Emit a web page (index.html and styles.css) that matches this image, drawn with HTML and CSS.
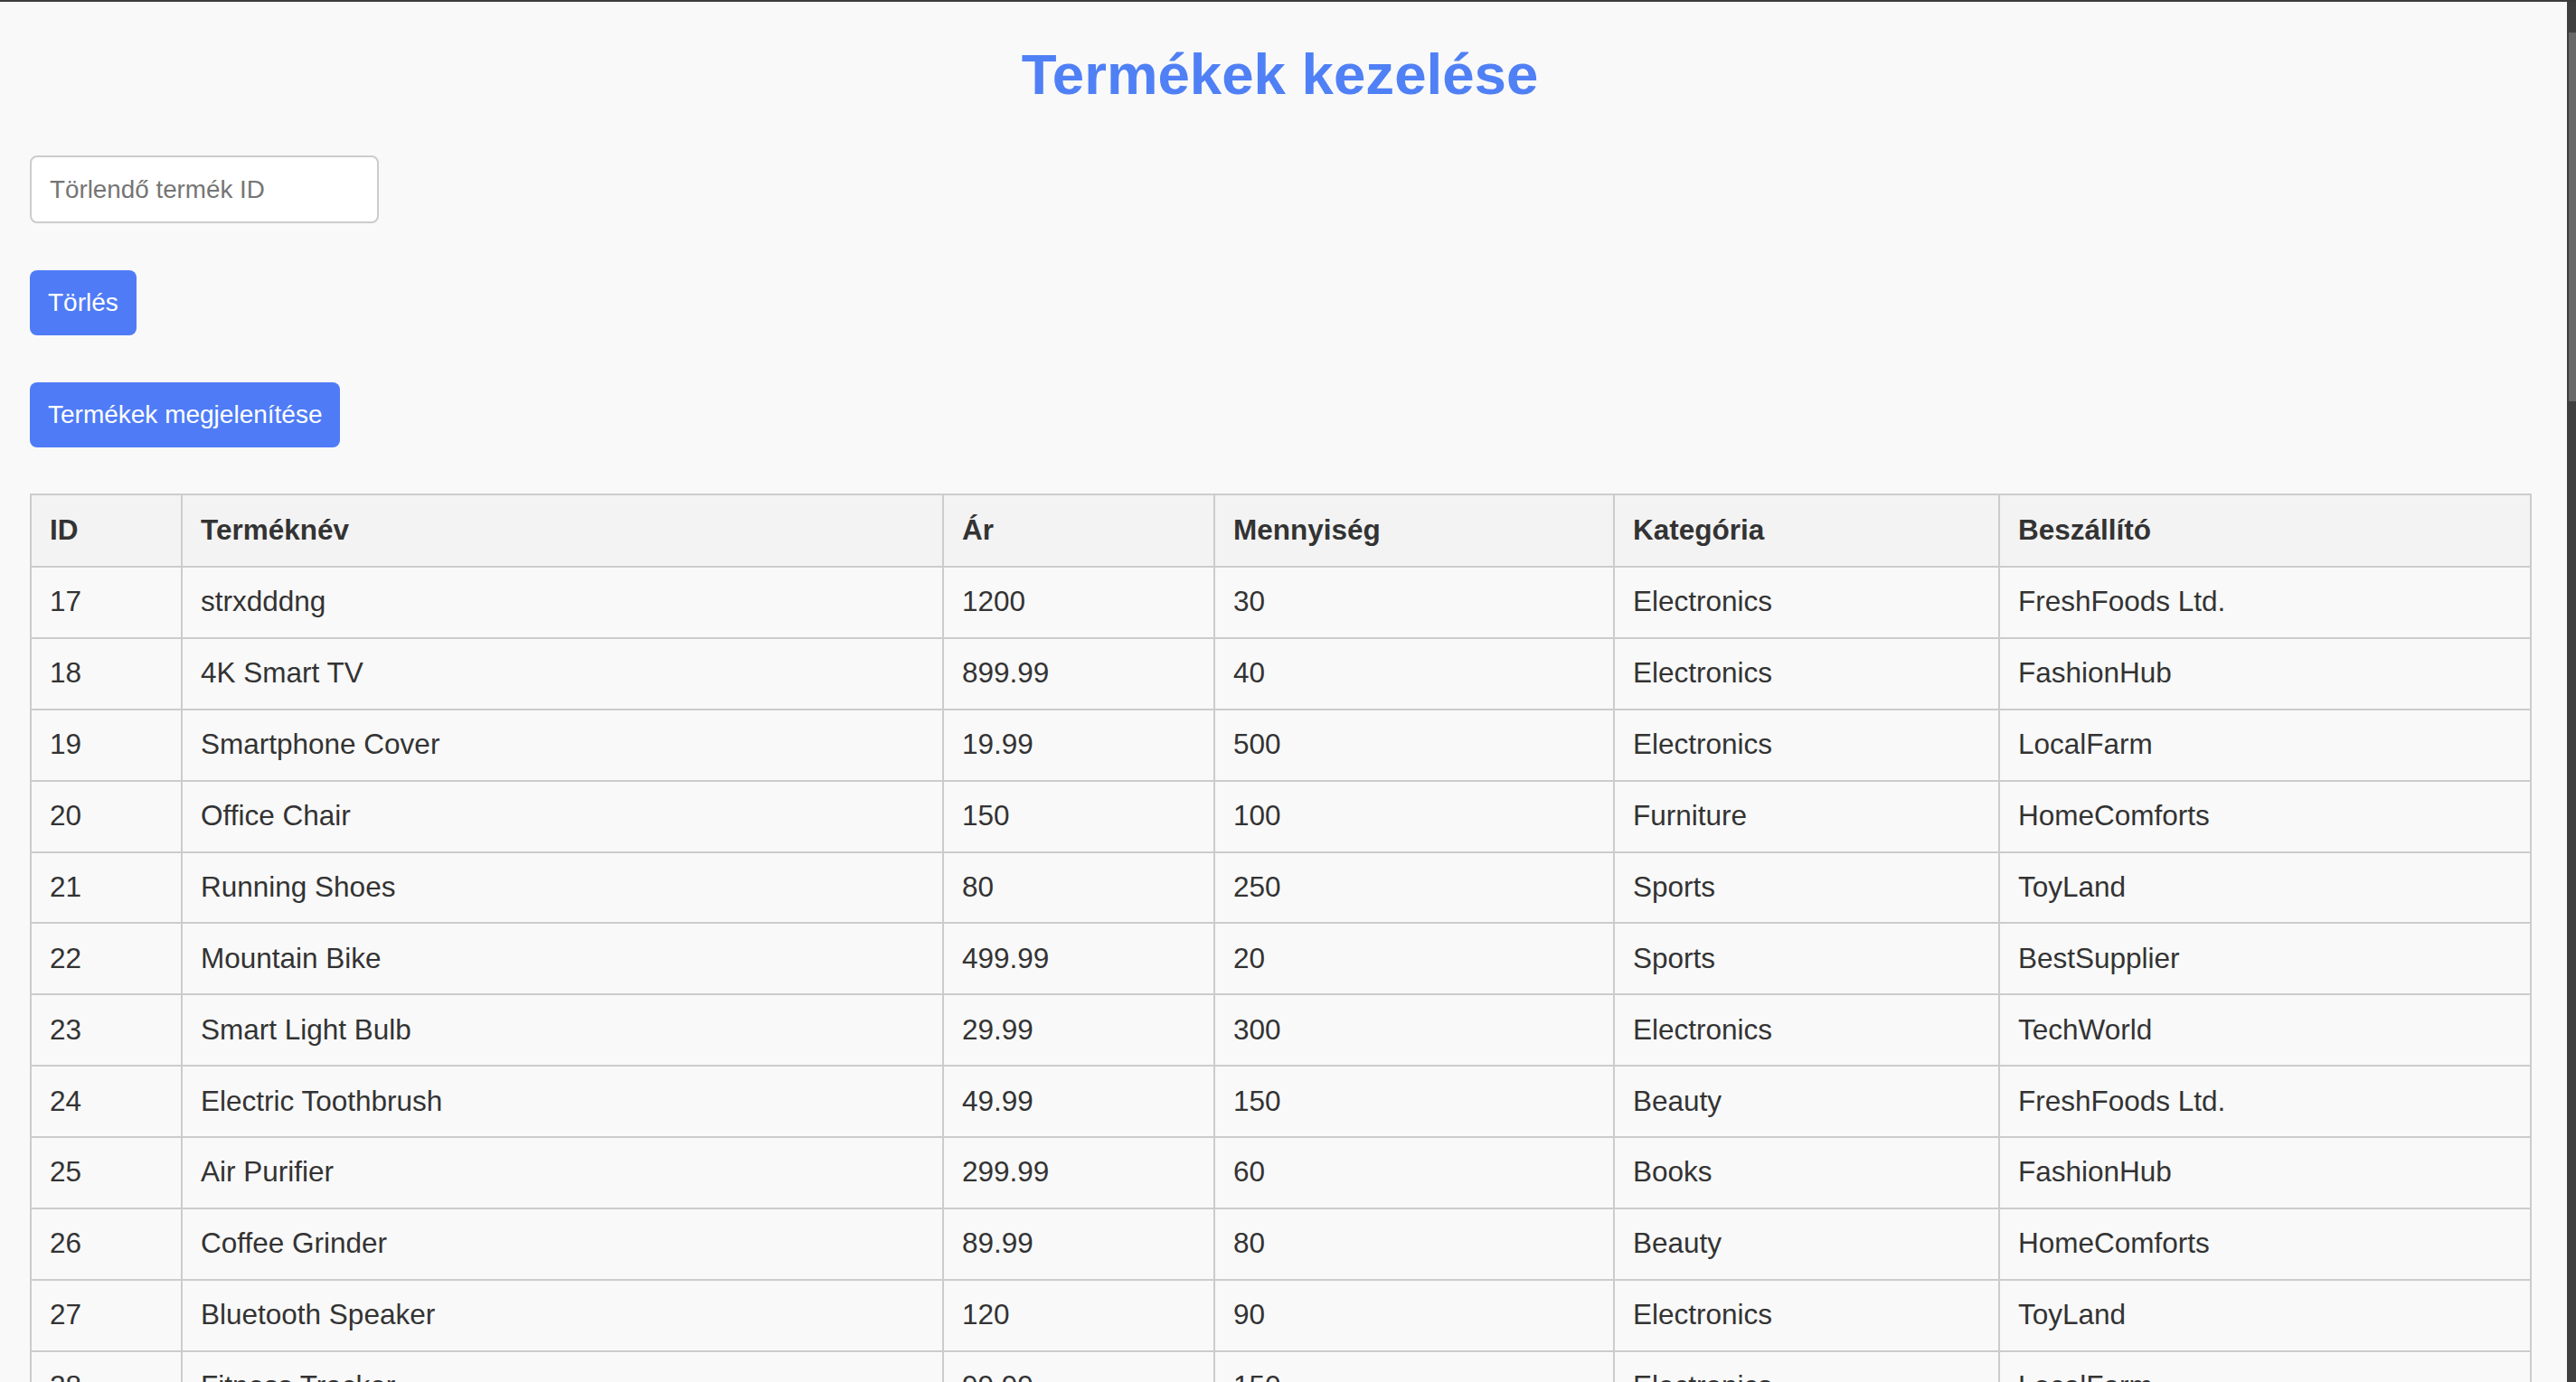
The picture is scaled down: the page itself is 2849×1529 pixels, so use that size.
FILE: index.html
```html
<!DOCTYPE html>
<html lang="hu">
<head>
<meta charset="utf-8">
<title>Termékek kezelése</title>
<link rel="stylesheet" href="styles.css">
</head>
<body>
<div class="window">
  <main class="page">
    <div class="content">
      <h1 class="title">Termékek kezelése</h1>
      <input class="id-input" type="text" placeholder="Törlendő termék ID">
      <button class="btn btn-delete">Törlés</button>
      <button class="btn btn-show">Termékek megjelenítése</button>
      <table class="products">
        <colgroup>
          <col class="c-id"><col class="c-name"><col class="c-price"><col class="c-qty"><col class="c-cat"><col class="c-sup">
        </colgroup>
        <thead>
          <tr><th>ID</th><th>Terméknév</th><th>Ár</th><th>Mennyiség</th><th>Kategória</th><th>Beszállító</th></tr>
        </thead>
        <tbody>
          <tr><td>17</td><td>strxdddng</td><td>1200</td><td>30</td><td>Electronics</td><td>FreshFoods Ltd.</td></tr>
          <tr><td>18</td><td>4K Smart TV</td><td>899.99</td><td>40</td><td>Electronics</td><td>FashionHub</td></tr>
          <tr><td>19</td><td>Smartphone Cover</td><td>19.99</td><td>500</td><td>Electronics</td><td>LocalFarm</td></tr>
          <tr><td>20</td><td>Office Chair</td><td>150</td><td>100</td><td>Furniture</td><td>HomeComforts</td></tr>
          <tr><td>21</td><td>Running Shoes</td><td>80</td><td>250</td><td>Sports</td><td>ToyLand</td></tr>
          <tr><td>22</td><td>Mountain Bike</td><td>499.99</td><td>20</td><td>Sports</td><td>BestSupplier</td></tr>
          <tr><td>23</td><td>Smart Light Bulb</td><td>29.99</td><td>300</td><td>Electronics</td><td>TechWorld</td></tr>
          <tr><td>24</td><td>Electric Toothbrush</td><td>49.99</td><td>150</td><td>Beauty</td><td>FreshFoods Ltd.</td></tr>
          <tr><td>25</td><td>Air Purifier</td><td>299.99</td><td>60</td><td>Books</td><td>FashionHub</td></tr>
          <tr><td>26</td><td>Coffee Grinder</td><td>89.99</td><td>80</td><td>Beauty</td><td>HomeComforts</td></tr>
          <tr><td>27</td><td>Bluetooth Speaker</td><td>120</td><td>90</td><td>Electronics</td><td>ToyLand</td></tr>
          <tr><td>28</td><td>Fitness Tracker</td><td>99.99</td><td>150</td><td>Electronics</td><td>LocalFarm</td></tr>
          <tr><td>29</td><td>Gaming Mouse</td><td>59.99</td><td>120</td><td>Electronics</td><td>TechWorld</td></tr>
        </tbody>
      </table>
    </div>
  </main>
  <div class="scrollbar"><div class="thumb"></div></div>
</div>
</body>
</html>
```

FILE: styles.css
```css
html, body {
  margin: 0;
  padding: 0;
  height: 100%;
  overflow: hidden;
}

body {
  background: #3f3f3f;
  font-family: "Liberation Sans", Arial, sans-serif;
  color: #333333;
}

.window {
  display: flex;
  height: 100%;
  border-top: 2px solid #3c3c3c;
  box-sizing: border-box;
}

.page {
  flex: 1;
  background: #f9f9f9;
  padding: 0 33px;
  overflow: hidden;
}

.content {
  width: 2765px;
  display: flex;
  flex-direction: column;
  align-items: flex-start;
}

.title {
  align-self: stretch;
  text-align: center;
  color: #5080f5;
  font-size: 63.6px;
  line-height: 72px;
  font-weight: bold;
  margin: 44px 0 54px;
}

.id-input {
  box-sizing: border-box;
  width: 386px;
  height: 75px;
  padding: 0 20px;
  border: 2px solid #cccccc;
  border-radius: 8px;
  background: #ffffff;
  font-family: "Liberation Sans", Arial, sans-serif;
  font-size: 27.8px;
  color: #333333;
  margin: 0 0 52px;
  outline: none;
}

.id-input::placeholder {
  color: #757575;
}

.btn {
  box-sizing: border-box;
  height: 72px;
  padding: 0 20px;
  border: none;
  border-radius: 8px;
  background: #4f7cf6;
  color: #ffffff;
  font-family: "Liberation Sans", Arial, sans-serif;
  font-size: 28px;
  cursor: pointer;
}

.btn-delete {
  margin-bottom: 52px;
}

.btn-show {
  margin-bottom: 51px;
}

.products {
  width: 2765px;
  table-layout: fixed;
  border-collapse: collapse;
  font-size: 31.5px;
  line-height: 36px;
}

.c-id { width: 167px; }
.c-name { width: 842px; }
.c-price { width: 300px; }
.c-qty { width: 442px; }
.c-cat { width: 426px; }
.c-sup { width: 588px; }

.products th,
.products td {
  border: 2px solid #cccccc;
  padding: 19.45px 20px 21.45px;
  text-align: left;
  white-space: nowrap;
}

.products th {
  background: #f3f3f3;
  font-weight: bold;
  padding-top: 20px;
  padding-bottom: 22px;
}

.products td {
  background: #f9f9f9;
}

.scrollbar {
  width: 10px;
  background: #3f3f3f;
  display: flex;
  flex-direction: column;
  align-items: flex-end;
}

.thumb {
  width: 8px;
  height: 408px;
  margin-top: 34px;
  background: #686868;
}
```
